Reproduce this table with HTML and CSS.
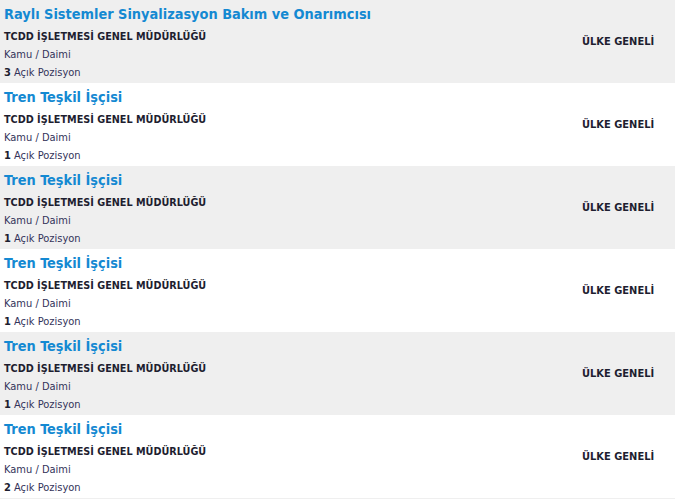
FILE: index.html
```html
<!DOCTYPE html>
<html lang="tr">
<head>
<meta charset="utf-8">
<link rel="stylesheet" href="styles.css">
</head>
<body>
<div class="list">
  <div class="row alt">
    <div class="info">
      <a class="title">Raylı Sistemler Sinyalizasyon Bakım ve Onarımcısı</a>
      <div class="company">TCDD İŞLETMESİ GENEL MÜDÜRLÜĞÜ</div>
      <div class="meta">Kamu / Daimi</div>
      <div class="meta"><b>3</b> Açık Pozisyon</div>
    </div>
    <div class="loc">ÜLKE GENELİ</div>
  </div>
  <div class="row">
    <div class="info">
      <a class="title">Tren Teşkil İşçisi</a>
      <div class="company">TCDD İŞLETMESİ GENEL MÜDÜRLÜĞÜ</div>
      <div class="meta">Kamu / Daimi</div>
      <div class="meta"><b>1</b> Açık Pozisyon</div>
    </div>
    <div class="loc">ÜLKE GENELİ</div>
  </div>
  <div class="row alt">
    <div class="info">
      <a class="title">Tren Teşkil İşçisi</a>
      <div class="company">TCDD İŞLETMESİ GENEL MÜDÜRLÜĞÜ</div>
      <div class="meta">Kamu / Daimi</div>
      <div class="meta"><b>1</b> Açık Pozisyon</div>
    </div>
    <div class="loc">ÜLKE GENELİ</div>
  </div>
  <div class="row">
    <div class="info">
      <a class="title">Tren Teşkil İşçisi</a>
      <div class="company">TCDD İŞLETMESİ GENEL MÜDÜRLÜĞÜ</div>
      <div class="meta">Kamu / Daimi</div>
      <div class="meta"><b>1</b> Açık Pozisyon</div>
    </div>
    <div class="loc">ÜLKE GENELİ</div>
  </div>
  <div class="row alt">
    <div class="info">
      <a class="title">Tren Teşkil İşçisi</a>
      <div class="company">TCDD İŞLETMESİ GENEL MÜDÜRLÜĞÜ</div>
      <div class="meta">Kamu / Daimi</div>
      <div class="meta"><b>1</b> Açık Pozisyon</div>
    </div>
    <div class="loc">ÜLKE GENELİ</div>
  </div>
  <div class="row">
    <div class="info">
      <a class="title">Tren Teşkil İşçisi</a>
      <div class="company">TCDD İŞLETMESİ GENEL MÜDÜRLÜĞÜ</div>
      <div class="meta">Kamu / Daimi</div>
      <div class="meta"><b>2</b> Açık Pozisyon</div>
    </div>
    <div class="loc">ÜLKE GENELİ</div>
  </div>
</div>
</body>
</html>
```

FILE: styles.css
```css
html, body {
  margin: 0;
  padding: 0;
  background: #ffffff;
}
body {
  font-family: "DejaVu Sans Condensed", "DejaVu Sans", sans-serif;
  color: #2b2b45;
  overflow: hidden;
}
.list {
  display: flex;
  flex-direction: column;
  border-bottom: 1px solid #efefef;
}
.row {
  height: 83px;
  box-sizing: border-box;
  padding: 4px 0 0 4px;
  display: grid;
  grid-template-columns: 1fr 93px;
  background: #ffffff;
}
.row.alt {
  background: #efefef;
}
.info {
  display: flex;
  flex-direction: column;
}
.title {
  font-size: 14.4px;
  font-weight: bold;
  line-height: 20px;
  color: #1489d2;
  margin-bottom: 4px;
  white-space: nowrap;
}
.company {
  font-size: 10.75px;
  font-weight: bold;
  line-height: 18px;
  color: #1e1e30;
}
.meta {
  font-size: 11px;
  line-height: 18px;
  color: #33335a;
}
.meta b {
  color: #1e1e30;
}
.loc {
  align-self: center;
  font-size: 11px;
  font-weight: bold;
  color: #1e1e30;
  margin-top: -4px;
}
```
